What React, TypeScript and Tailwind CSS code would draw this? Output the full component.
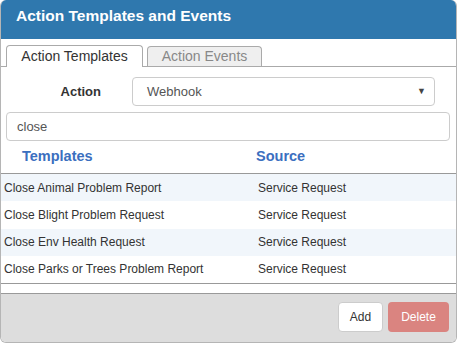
const rows = [
  'Close Animal Problem Report',
  'Close Blight Problem Request',
  'Close Env Health Request',
  'Close Parks or Trees Problem Report',
];

export default function App() {
  return (
    <div className="w-[457px] h-[343px] bg-white font-['Liberation_Sans',Arial,sans-serif] text-[#333]">
      <div className="flex h-full flex-col overflow-hidden rounded-[6px] border border-t-0 border-[#b5b5b5]">
        <div className="flex h-[39px] shrink-0 items-start bg-[#2f78ae] px-[15px] pt-[5px]">
          <h1 className="text-[15.5px] leading-[22px] font-bold text-white">Action Templates and Events</h1>
        </div>

        <div className="mt-[6px] flex h-[22px] items-end gap-[4px] border-b border-[#aaa] pl-[5px]">
          <div className="-mb-px flex h-[22px] w-[137px] items-center justify-center rounded-t-[4px] border border-b-0 border-[#aaa] bg-white text-[14px] text-[#333]">
            Action Templates
          </div>
          <div className="flex h-[20px] w-[115px] items-center justify-center rounded-t-[4px] border border-b-0 border-[#aaa] bg-[#efefef] text-[14px] text-[#888]">
            Action Events
          </div>
        </div>

        <div className="flex items-center pt-[10px]">
          <label className="w-[100px] text-right text-[13px] font-bold">Action</label>
          <div className="ml-[31px] flex h-[29px] w-[303px] items-center justify-between rounded-[4px] border border-[#ccc] pl-[14px] pr-[8px] text-[13px] text-[#555]">
            <span>Webhook</span>
            <span className="text-[9px] text-[#444]">▼</span>
          </div>
        </div>

        <div className="px-[5px] pt-[6px]">
          <div className="flex h-[29px] w-[444px] items-center rounded-[4px] border border-[#ccc] pl-[10px] text-[13px] text-[#555]">
            close
          </div>
        </div>

        <div className="flex h-[33px] items-center border-b border-[#999] text-[14.5px] font-bold text-[#3b6fbf]">
          <div className="w-[255px] pl-[21px]">Templates</div>
          <div>Source</div>
        </div>

        <div className="text-[12px] text-[#333]">
          {rows.map((r, i) => (
            <div key={r} className={`flex h-[27.25px] items-center ${i % 2 === 0 ? 'bg-[#f1f6fb]' : 'bg-white'}`}>
              <div className="w-[257px] pl-[3px]">{r}</div>
              <div>Service Request</div>
            </div>
          ))}
        </div>

        <div className="h-[11px] border-y border-[#999]" />

        <div className="flex flex-1 items-start justify-end gap-[5px] bg-[#dddddd] pr-[7px] pt-[8px]">
          <button className="h-[30px] w-[45px] rounded-[4px] border border-[#ccc] bg-white text-[12px] text-[#333]">Add</button>
          <button className="h-[30px] w-[61px] rounded-[4px] bg-[#da8480] text-[12px] text-white">Delete</button>
        </div>
      </div>
    </div>
  );
}
